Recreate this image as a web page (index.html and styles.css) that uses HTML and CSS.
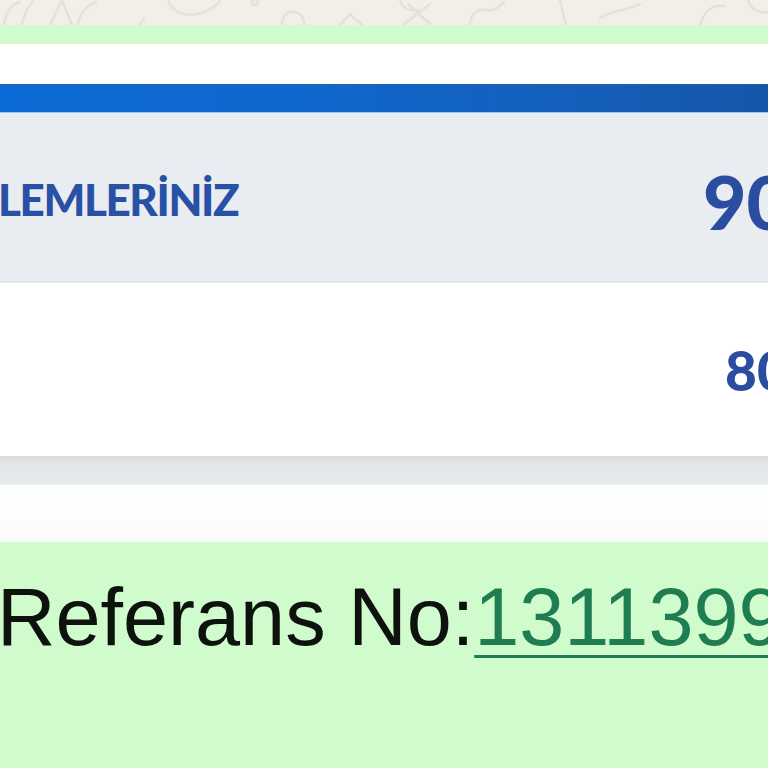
FILE: index.html
```html
<!DOCTYPE html>
<html lang="tr">
<head>
<meta charset="utf-8">
<title>Referans</title>
<link rel="stylesheet" href="styles.css">
</head>
<body>
<div class="wall">
  <svg class="doodles" width="768" height="25" viewBox="0 0 768 25" fill="none" stroke="#e6e1d8" stroke-width="2.5" stroke-linecap="round">
    <path d="M4 24 C6 12 12 4 20 2"/>
    <path d="M22 24 C24 14 28 6 34 0"/>
    <path d="M50 25 L62 0 L72 25"/>
    <path d="M78 24 C80 14 86 6 96 2"/>
    <path d="M140 25 L144 18"/>
    <path d="M168 0 C172 14 190 18 204 12 C214 8 220 2 220 0"/>
    <circle cx="255" cy="2" r="3"/>
    <path d="M282 25 C282 14 290 10 296 12 C302 14 304 20 304 25"/>
    <path d="M340 25 L350 14 L362 25"/>
    <path d="M400 0 C402 8 410 12 418 10 M408 4 L430 24 M430 4 L404 24"/>
    <path d="M470 25 C470 14 478 8 486 10 C494 12 500 6 504 2"/>
    <path d="M560 0 L566 25"/>
    <path d="M600 18 C610 10 630 10 640 4"/>
    <path d="M700 25 C704 12 712 4 724 6"/>
    <path d="M748 0 C750 8 758 14 768 12"/>
  </svg>
</div>
<div class="bubble">
  <div class="shot">
    <div class="gap-top"></div>
    <div class="bluebar"></div>
    <div class="row row-head">
      <span class="label">LEMLERİNİZ</span>
      <span class="value value-big">90,00 TL</span>
    </div>
    <div class="row row-item">
      <span class="label"></span>
      <span class="value value-mid">80,00 TL</span>
    </div>
    <div class="band"></div>
    <div class="gap-bottom"></div>
  </div>
  <div class="caption">
    <span class="ref">Referans No:</span><a class="link" href="#">1311399204</a>
  </div>
</div>
</body>
</html>
```

FILE: styles.css
```css
html, body {
  margin: 0;
  padding: 0;
  width: 768px;
  height: 768px;
  overflow: hidden;
  background: #d0fccd;
}

.wall {
  height: 25px;
  background: #f3efe8;
  overflow: hidden;
}

.doodles {
  display: block;
}

.bubble {
  background: #d0fccd;
  padding-top: 19px;
  height: 724px;
}

.shot {
  background: #ffffff;
  display: flex;
  flex-direction: column;
}

.gap-top {
  height: 40px;
  background: #ffffff;
}

.bluebar {
  height: 29px;
  background: linear-gradient(90deg, #0b6bd6 0%, #0f67cc 40%, #155fbb 75%, #1556aa 100%);
  border-top: 1px solid #2a5fa8;
  border-bottom: 1px solid #9cc8ef;
  box-sizing: border-box;
}

.row {
  display: grid;
  align-items: center;
  overflow: hidden;
  white-space: nowrap;
  font-family: "Lato", "Open Sans", sans-serif;
  font-weight: 900;
  color: #2850a4;
}

.row-head {
  height: 170px;
  background: #e9edf1;
  grid-template-columns: 703px 1fr;
  border-bottom: 2px solid #e4e7ea;
  box-sizing: border-box;
}

.row-item {
  height: 173px;
  background: #ffffff;
  grid-template-columns: 725px 1fr;
}

.label {
  font-size: 44px;
  letter-spacing: -1.4px;
  margin-left: -2px;
  padding-top: 4px;
}

.value {
  color: #2a4d9f;
}

.value-big {
  font-size: 75px;
  padding-top: 8px;
}

.value-mid {
  font-size: 55px;
  padding-top: 0;
}

.band {
  height: 29px;
  background: linear-gradient(180deg, #d9dbde 0, #dcdfe2 4px, #e3e7ea 8px, #e7ebee 100%);
  border-bottom: 1px solid #eef1f2;
  box-sizing: border-box;
}

.gap-bottom {
  height: 57px;
  background: linear-gradient(180deg, #fdfefe 0%, #fdfdfd 70%, #fefafa 90%, #f8fdf6 100%);
}

.caption {
  padding-top: 29px;
  font-family: "Liberation Sans", Arial, sans-serif;
  font-size: 81px;
  line-height: 92px;
  white-space: nowrap;
  margin-left: -3px;
}

.ref {
  color: #0d120d;
}

.link {
  color: #1f7d52;
  text-decoration: underline;
  text-decoration-thickness: 3px;
  text-underline-offset: 10px;
}
```
